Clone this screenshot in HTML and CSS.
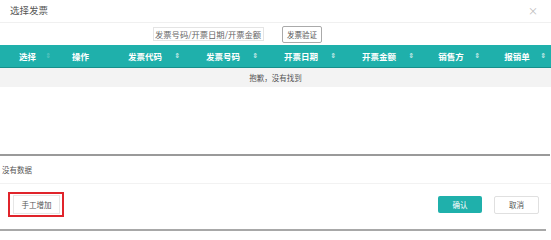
FILE: index.html
```html
<!DOCTYPE html>
<html>
<head>
<meta charset="utf-8">
<link rel="stylesheet" href="styles.css">
</head>
<body>
<div class="modal">
  <div class="modal-header">
    <span class="title">选择发票</span>
    <span class="close">×</span>
  </div>
  <div class="toolbar">
    <input class="search" type="text" placeholder="发票号码/开票日期/开票金额">
    <button class="btn btn-verify">发票验证</button>
  </div>
  <div class="table">
    <div class="thead">
      <div class="th c1"><span>选择</span><i class="sort faint">&#8661;</i></div>
      <div class="th c2"><span>操作</span></div>
      <div class="th c3"><span>发票代码</span><i class="sort">&#8661;</i></div>
      <div class="th c3"><span>发票号码</span><i class="sort">&#8661;</i></div>
      <div class="th c3"><span>开票日期</span><i class="sort">&#8661;</i></div>
      <div class="th c3"><span>开票金额</span><i class="sort">&#8661;</i></div>
      <div class="th c7"><span>销售方</span><i class="sort">&#8661;</i></div>
      <div class="th c7"><span>报销单</span><i class="sort">&#8661;</i></div>
    </div>
    <div class="empty-row">抱歉，没有找到</div>
    <div class="table-space"></div>
  </div>
  <div class="nodata">没有数据</div>
  <div class="footer">
    <div class="highlight"><button class="btn btn-manual">手工增加</button></div>
    <div class="actions">
      <button class="btn btn-ok">确认</button>
      <button class="btn btn-cancel">取消</button>
    </div>
  </div>
</div>
</body>
</html>
```
FILE: styles.css
```css
* { box-sizing: border-box; }
html, body { margin: 0; padding: 0; background: #fff; }
body {
  font-family: "Noto Sans CJK SC", "Noto Sans", sans-serif;
  color: #555;
  width: 551px;
  height: 240px;
  overflow: hidden;
}
.modal { width: 551px; }
.modal-header {
  height: 23px;
  display: flex;
  align-items: center;
  justify-content: space-between;
  padding: 0 13px 2px 10px;
  border-bottom: 1px solid #f0f0f0;
}
.title { font-size: 9.5px; color: #555; }
.close { font-size: 10px; color: #bbb; }
.toolbar {
  height: 22px;
  display: flex;
  align-items: center;
  padding-left: 153px;
}
.search {
  width: 111px;
  height: 14px;
  border: 1px solid #e4e4e4;
  padding: 0 0 0 1px;
  font-family: inherit;
  font-size: 8.3px;
  color: #555;
  outline: none;
}
.search::placeholder { color: #666; }
.btn {
  font-family: inherit;
  font-size: 7.5px;
  background: #fff;
  color: #555;
  cursor: pointer;
  padding: 0;
}
.btn-verify {
  margin-left: 18px;
  width: 40px;
  height: 17px;
  border: 1px solid #aaa;
  border-radius: 2px;
}
.thead {
  display: flex;
  height: 23px;
  background: #1fb0ab;
  border-bottom: 1px solid #168f8b;
}
.th {
  position: relative;
  display: flex;
  align-items: center;
  justify-content: center;
  color: #fff;
  font-weight: bold;
  font-size: 8.5px;
}
.c1 { width: 55px; }
.c2 { width: 51px; }
.c3 { width: 78px; }
.c7 { width: 66px; }
.sort {
  position: absolute;
  right: 4px;
  top: 50%;
  transform: translateY(-50%);
  font-style: normal;
  font-size: 7px;
  color: rgba(255,255,255,0.75);
  font-family: "DejaVu Sans", sans-serif;
}
.sort.faint { color: rgba(255,255,255,0.25); }
.empty-row {
  height: 19px;
  background: #f3f3f3;
  display: flex;
  align-items: center;
  justify-content: center;
  font-size: 7.5px;
  color: #555;
}
.table-space {
  height: 69px;
  border-bottom: 2px solid #9a9a9a;
  margin-right: 1px;
}
.nodata {
  height: 28px;
  display: flex;
  align-items: center;
  padding-left: 2px;
  font-size: 7.5px;
  color: #555;
  border-bottom: 1px solid #f2f2f2;
}
.footer {
  height: 47px;
  display: flex;
  align-items: center;
  justify-content: space-between;
  padding: 0 7px 4px 8px;
  border-bottom: 2px solid #a8a8a8;
  margin-right: 5px;
}
.highlight {
  border: 2px solid #e0242b;
  padding: 1px 2px 1px 3px;
}
.btn-manual {
  width: 47px;
  height: 19px;
  border: 1px solid #e6e6e6;
  display: block;
}
.actions { display: flex; gap: 12px; align-items: center; }
.btn-ok {
  width: 44px;
  height: 17px;
  background: #1fb0ab;
  color: #fff;
  border: none;
  border-radius: 2px;
}
.btn-cancel {
  width: 45px;
  height: 18px;
  border: 1px solid #e0e0e0;
  border-radius: 2px;
}
```
